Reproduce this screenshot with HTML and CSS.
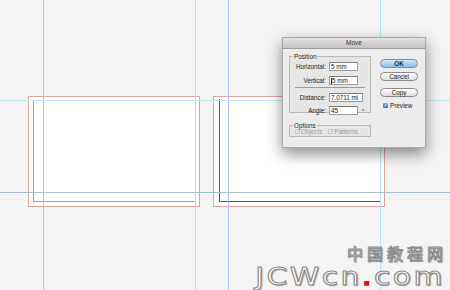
FILE: index.html
```html
<!DOCTYPE html>
<html lang="zh">

<head>
    <meta charset="UTF-8">
    <title>Move</title>
    <link rel="stylesheet" href="styles.css">
</head>

<body>
    <div class="canvas">
        <!-- artwork -->
        <div class="art art-left">
            <div class="copy copy-left"></div>
        </div>
        <div class="art art-right">
            <div class="copy copy-right"></div>
        </div>

        <!-- guides -->
        <div class="guide v v1"></div>
        <div class="guide v v2"></div>
        <div class="guide v v3"></div>
        <div class="guide v v4"></div>
        <div class="guide h h1"></div>
        <div class="guide h h2"></div>

        <!-- Move dialog -->
        <div class="dialog">
            <div class="titlebar">Move</div>
            <div class="dialog-body">
                <div class="col-left">
                    <div class="group group-position">
                        <span class="group-label">Position</span>
                        <div class="row row-h">
                            <label>Horizontal:</label>
                            <span class="field">5 mm</span>
                        </div>
                        <div class="row row-v">
                            <label>Vertical:</label>
                            <span class="field"><span class="caret"></span>5 mm</span>
                        </div>
                        <div class="sep"></div>
                        <div class="row row-d">
                            <label>Distance:</label>
                            <span class="field">7.0711 mi</span>
                        </div>
                        <div class="row row-a">
                            <label>Angle:</label>
                            <span class="field">45</span>
                            <span class="deg">°</span>
                        </div>
                    </div>
                    <div class="group group-options">
                        <span class="group-label">Options</span>
                        <div class="opts">
                            <span class="opt"><span class="box off">&#10003;</span>Objects</span>
                            <span class="opt"><span class="box off">&#10003;</span>Patterns</span>
                        </div>
                    </div>
                </div>
                <div class="col-right">
                    <div class="btn btn-ok">OK</div>
                    <div class="btn btn-cancel">Cancel</div>
                    <div class="btn btn-copy">Copy</div>
                    <div class="preview"><span class="box on">&#10003;</span>Preview</div>
                </div>
            </div>
        </div>

        <!-- watermark -->
        <div class="mark">
            <div class="mark-cn">中国教程网</div>
            <div class="mark-en">JCWcn<span class="dot">.</span>com</div>
        </div>
    </div>
</body>

</html>
```

FILE: styles.css
```css
html, body {
    margin: 0;
    padding: 0;
    background: #f4f4f4;
    overflow: hidden;
}
.canvas {
    position: relative;
    width: 450px;
    height: 290px;
    background: #f4f4f4;
    font-family: "Liberation Sans", "DejaVu Sans", sans-serif;
}

/* artwork: red bleed boxes with the moved copy inside */
.art {
    position: absolute;
    top: 96px;
    width: 170px;
    height: 109px;
    border: 1px solid #e3a2a2;
    background: #fff;
}
.art-left { left: 28px; }
.art-right { left: 213px; }
.copy {
    position: absolute;
    box-sizing: border-box;
}
.copy-left {
    left: 4px;
    top: 3px;
    width: 163px;
    height: 102px;
    border-left: 1px solid #a2a2a2;
    border-bottom: 1px solid #a2a2a2;
}
.copy-right {
    left: 5px;
    top: 2px;
    width: 162px;
    height: 103px;
    border: 1px solid #4f5656;
    border-top: none;
}

/* guides */
.guide {
    position: absolute;
}
.guide.v {
    top: 0;
    width: 1px;
    height: 290px;
}
.guide.h {
    left: 0;
    height: 1px;
    width: 450px;
}
.v1 { left: 43px; background: #a8c2e2; }
.v2 { left: 195px; background: #b4e6ee; }
.v3 { left: 228px; background: #a8c2e2; }
.v4 { left: 380px; background: #b4e6ee; }
.h1 { top: 100px; background: #bfe6ef; }
.h2 { top: 192px; background: #a9c0cf; }

/* dialog */
.dialog {
    position: absolute;
    left: 282px;
    top: 37px;
    width: 144px;
    height: 111px;
    background: #ececec;
    border: 1px solid #a9a9a9;
    box-sizing: border-box;
    box-shadow: 0 6px 14px rgba(0, 0, 0, 0.45);
    font-size: 6.3px;
    color: #222;
}
.titlebar {
    height: 10px;
    line-height: 10px;
    text-align: center;
    background: linear-gradient(#e2e2e2, #c3c3c3);
    border-bottom: 1px solid #9c9c9c;
    color: #333;
    font-size: 6.5px;
}
.dialog-body {
    display: grid;
    grid-template-columns: 82px 38px;
    column-gap: 9px;
    padding: 7px 0 0 6px;
}

.group {
    position: relative;
    border: 1px solid #b9b9b9;
    background: #e6e6e6;
}
.group-label {
    position: absolute;
    top: -4px;
    left: 3px;
    line-height: 7px;
    padding: 0 1px;
    background: #ececec;
}
.group-position {
    height: 57px;
    padding-top: 5px;
    box-sizing: border-box;
}
.group-options {
    margin-top: 12px;
    height: 12px;
    box-sizing: border-box;
}

.row {
    display: grid;
    grid-template-columns: 36px 29px 8px;
    column-gap: 3px;
    align-items: center;
    height: 8px;
}
.row label {
    text-align: right;
}
.row-v { margin-top: 6px; }
.row-d { margin-top: 5px; }
.row-a { margin-top: 5px; }
.field {
    display: block;
    height: 7px;
    line-height: 7px;
    background: #fff;
    border: 1px solid #9d9d9d;
    border-top-color: #7d7d7d;
    padding-left: 1px;
    overflow: hidden;
    white-space: nowrap;
}
.row-d .field { width: 31px; }
.caret {
    display: inline-block;
    width: 1px;
    height: 6px;
    background: #222;
    vertical-align: -1px;
}
.deg {
    font-size: 6px;
    padding-left: 1px;
}
.sep {
    margin: 3px 5px 0 5px;
    height: 1px;
    background: #9a9a9a;
}

.opts {
    display: flex;
    gap: 6px;
    padding: 2px 0 0 5px;
    color: #9a9a9a;
    line-height: 7px;
}
.opt {
    display: flex;
    align-items: center;
    gap: 1px;
}
.box {
    display: inline-block;
    width: 5px;
    height: 5px;
    font-size: 5px;
    line-height: 5px;
    text-align: center;
    box-sizing: border-box;
}
.box.off {
    border: 1px solid #c9c9c9;
    background: #f3f3f3;
    color: #9a9a9a;
    line-height: 3px;
}
.box.on {
    background: linear-gradient(#7ab0e8, #2e6fc4);
    color: #fff;
    border-radius: 1px;
    font-weight: bold;
}

.col-right {
    display: flex;
    flex-direction: column;
    padding-top: 3px;
}
.btn {
    height: 7px;
    line-height: 7px;
    text-align: center;
    border: 1px solid #8a8a8a;
    border-radius: 5px;
    background: linear-gradient(#ffffff, #dcdcdc);
}
.btn-ok {
    background: linear-gradient(#d4e8fb, #86bbee);
    border-color: #6f8fb4;
    font-weight: bold;
}
.btn-cancel { margin-top: 4px; }
.btn-copy { margin-top: 7px; }
.preview {
    display: flex;
    align-items: center;
    gap: 2px;
    margin: 5px 0 0 3px;
}

/* watermark */
.mark {
    position: absolute;
    right: 7px;
    bottom: -1px;
    text-align: right;
    color: #fff;
}
.mark-cn {
    font-family: "Noto Sans CJK SC", sans-serif;
    font-size: 16px;
    line-height: 20px;
    letter-spacing: 4px;
    margin-right: -4px;
    -webkit-text-stroke: 1px #8c8c8c;
    text-shadow: 1px 1px 1px rgba(0, 0, 0, 0.35);
}
.mark-en {
    font-family: "DejaVu Sans", sans-serif;
    font-size: 24px;
    line-height: 28px;
    letter-spacing: 2px;
    margin-right: -2px;
    transform: scaleX(1.24);
    transform-origin: right;
    -webkit-text-stroke: 1px #8c8c8c;
    text-shadow: 1px 1px 1px rgba(0, 0, 0, 0.35);
}
.dot {
    color: #e01010;
    -webkit-text-stroke: 1.6px #e01010;
    text-shadow: none;
}
```
